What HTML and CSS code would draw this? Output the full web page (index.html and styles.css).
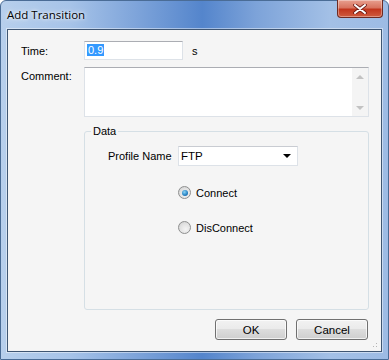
FILE: index.html
```html
<!DOCTYPE html>
<html lang="en">

<head>
    <meta charset="UTF-8">
    <title>Add Transition</title>
    <link rel="stylesheet" href="styles.css">
</head>

<body>
    <div class="window">
        <div class="titlebar">
            <span class="title">Add Transition</span>
            <div class="close-btn">
                <svg width="14" height="10" viewBox="0 0 14 10">
                    <path d="M2 1 L12 9 M12 1 L2 9" stroke="#6b1a14" stroke-width="3.6" stroke-linecap="round"/>
                    <path d="M2 1 L12 9 M12 1 L2 9" stroke="#fff" stroke-width="2" stroke-linecap="round"/>
                </svg>
            </div>
        </div>

        <div class="client">
            <!-- Time -->
            <div class="row time-row">
                <label class="field-label">Time:</label>
                <div class="textbox time-box"><span class="selected">0.9</span></div>
                <span class="unit">s</span>
            </div>

            <!-- Comment -->
            <div class="row comment-row">
                <label class="field-label comment-label">Comment:</label>
                <div class="textbox comment-box">
                    <div class="scroll">
                        <span class="arrow-up"></span>
                        <span class="arrow-down"></span>
                    </div>
                </div>
            </div>

            <!-- Data group -->
            <fieldset class="group">
                <legend>Data</legend>
                <div class="group-body">
                    <div class="profile-row">
                        <label>Profile Name</label>
                        <div class="combo">
                            <span>FTP</span>
                            <span class="combo-arrow"></span>
                        </div>
                    </div>
                    <div class="radio-list">
                        <div class="radio-item">
                            <span class="radio checked"></span>
                            <span>Connect</span>
                        </div>
                        <div class="radio-item">
                            <span class="radio"></span>
                            <span>DisConnect</span>
                        </div>
                    </div>
                </div>
            </fieldset>

            <div class="buttons">
                <button class="btn">OK</button>
                <button class="btn">Cancel</button>
            </div>
            <div class="grip"></div>
        </div>
    </div>
</body>

</html>
```

FILE: styles.css
```css
body {
    margin: 0;
    font-family: "Liberation Sans", Arial, sans-serif;
    font-size: 11px;
    color: #000;
    background: #fff;
}

.window {
    width: 389px;
    height: 360px;
    box-sizing: border-box;
    border-radius: 6px 6px 0 0;
    border: 1px solid #4a6c96;
    background: linear-gradient(90deg, #b7cfec 0%, #a6c3e8 18%, #7ea4da 35%, #5485cc 52%, #7da3d9 66%, #a3c0e6 85%, #9dbbe4 100%);
    display: flex;
    flex-direction: column;
}

.titlebar {
    height: 28px;
    display: flex;
    justify-content: space-between;
    align-items: flex-start;
    padding-left: 6px;
}

.title {
    font-family: "Open Sans", "Liberation Sans", sans-serif;
    font-size: 11.5px;
    color: #000;
    margin-top: 6px;
    text-shadow: 0 0 6px rgba(255, 255, 255, 0.9), 0 0 3px rgba(255, 255, 255, 0.9);
}

.close-btn {
    width: 46px;
    height: 18px;
    margin-right: 5px;
    margin-top: -1px;
    box-sizing: border-box;
    border: 1px solid #6e2a22;
    border-top: none;
    border-radius: 0 0 4px 4px;
    background: linear-gradient(#e8a08f 0%, #d8745f 45%, #c2361d 55%, #cf5b3f 100%);
    box-shadow: inset 0 0 0 1px rgba(255, 255, 255, 0.35);
    display: flex;
    align-items: center;
    justify-content: center;
}

.client {
    position: relative;
    margin: 0 6px 7px 6px;
    flex: 1;
    background: #f5f5f5;
    border: 1px solid #3f5673;
    box-shadow: 0 0 0 1px rgba(255, 255, 255, 0.45);
    padding: 11px 0 0 13px;
}

.row {
    display: flex;
}

.field-label {
    width: 63px;
}

.time-row {
    align-items: center;
    height: 19px;
}

.textbox {
    background: #fff;
    box-sizing: border-box;
    border: 1px solid #dde2e8;
    border-top-color: #abadb3;
}

.time-box {
    width: 99px;
    height: 19px;
    padding: 2px 0 0 2px;
}

.selected {
    background: #3399ff;
    color: #fff;
    padding: 0 1px;
}

.unit {
    margin-left: 9px;
}

.comment-row {
    margin-top: 7px;
}

.comment-label {
    padding-top: 3px;
}

.comment-box {
    width: 285px;
    height: 50px;
    display: flex;
    justify-content: flex-end;
}

.scroll {
    width: 16px;
    background: #f4f4f4;
    display: flex;
    flex-direction: column;
    justify-content: space-between;
    align-items: center;
    padding: 7px 0 6px;
}

.arrow-up {
    border-left: 4px solid transparent;
    border-right: 4px solid transparent;
    border-bottom: 4px solid #c2c2c2;
}

.arrow-down {
    border-left: 4px solid transparent;
    border-right: 4px solid transparent;
    border-top: 4px solid #c2c2c2;
}

.group {
    margin: 8px 0 0 63px;
    width: 285px;
    height: 185px;
    box-sizing: border-box;
    border: 1px solid #d5dfe5;
    border-radius: 3px;
    padding: 0;
    min-width: 0;
}

.group legend {
    padding: 0 2px;
    margin-left: 6px;
}

.group-body {
    padding-left: 23px;
}

.profile-row {
    display: flex;
    align-items: center;
    margin-top: 9px;
}

.profile-row label {
    width: 70px;
}

.combo {
    width: 120px;
    height: 20px;
    box-sizing: border-box;
    background: #fff;
    border: 1px solid #dde2e8;
    border-top-color: #c9ccd2;
    display: flex;
    align-items: center;
    justify-content: space-between;
    padding: 0 6px 0 2px;
    font-size: 11.5px;
}

.combo-arrow {
    border-left: 4px solid transparent;
    border-right: 4px solid transparent;
    border-top: 4px solid #000;
}

.radio-list {
    margin-left: 70px;
    margin-top: 20px;
    display: flex;
    flex-direction: column;
    gap: 22px;
}

.radio-item {
    display: flex;
    align-items: center;
    gap: 5px;
    height: 13px;
}

.radio {
    width: 11px;
    height: 11px;
    border-radius: 50%;
    border: 1px solid #8e8f8f;
    background: radial-gradient(circle at 60% 65%, #f4f4f4 0%, #e2e2e2 55%, #cacaca 100%);
    position: relative;
}

.radio.checked::after {
    content: "";
    position: absolute;
    left: 2.5px;
    top: 2.5px;
    width: 6px;
    height: 6px;
    border-radius: 50%;
    background: radial-gradient(circle at 40% 35%, #8ad3f5 0%, #2a86c6 55%, #0e4f8d 100%);
}

.buttons {
    display: flex;
    justify-content: flex-end;
    gap: 9px;
    margin-top: 9px;
    padding-right: 13px;
}

.btn {
    width: 72px;
    height: 21px;
    font-family: "Liberation Sans", Arial, sans-serif;
    font-size: 11.5px;
    color: #000;
    border: 1px solid #707070;
    border-radius: 3px;
    background: linear-gradient(#f2f2f2 0%, #ebebeb 45%, #dddddd 50%, #cfcfcf 100%);
    box-shadow: inset 0 0 0 1px rgba(255, 255, 255, 0.7);
    padding: 0;
}

.grip {
    position: absolute;
    right: 2px;
    bottom: 2px;
    width: 10px;
    height: 10px;
    background:
        radial-gradient(circle, #b5b5b5 0.8px, transparent 1px) 0 0 / 3px 3px;
    clip-path: polygon(100% 0, 100% 100%, 0 100%);
}
```
